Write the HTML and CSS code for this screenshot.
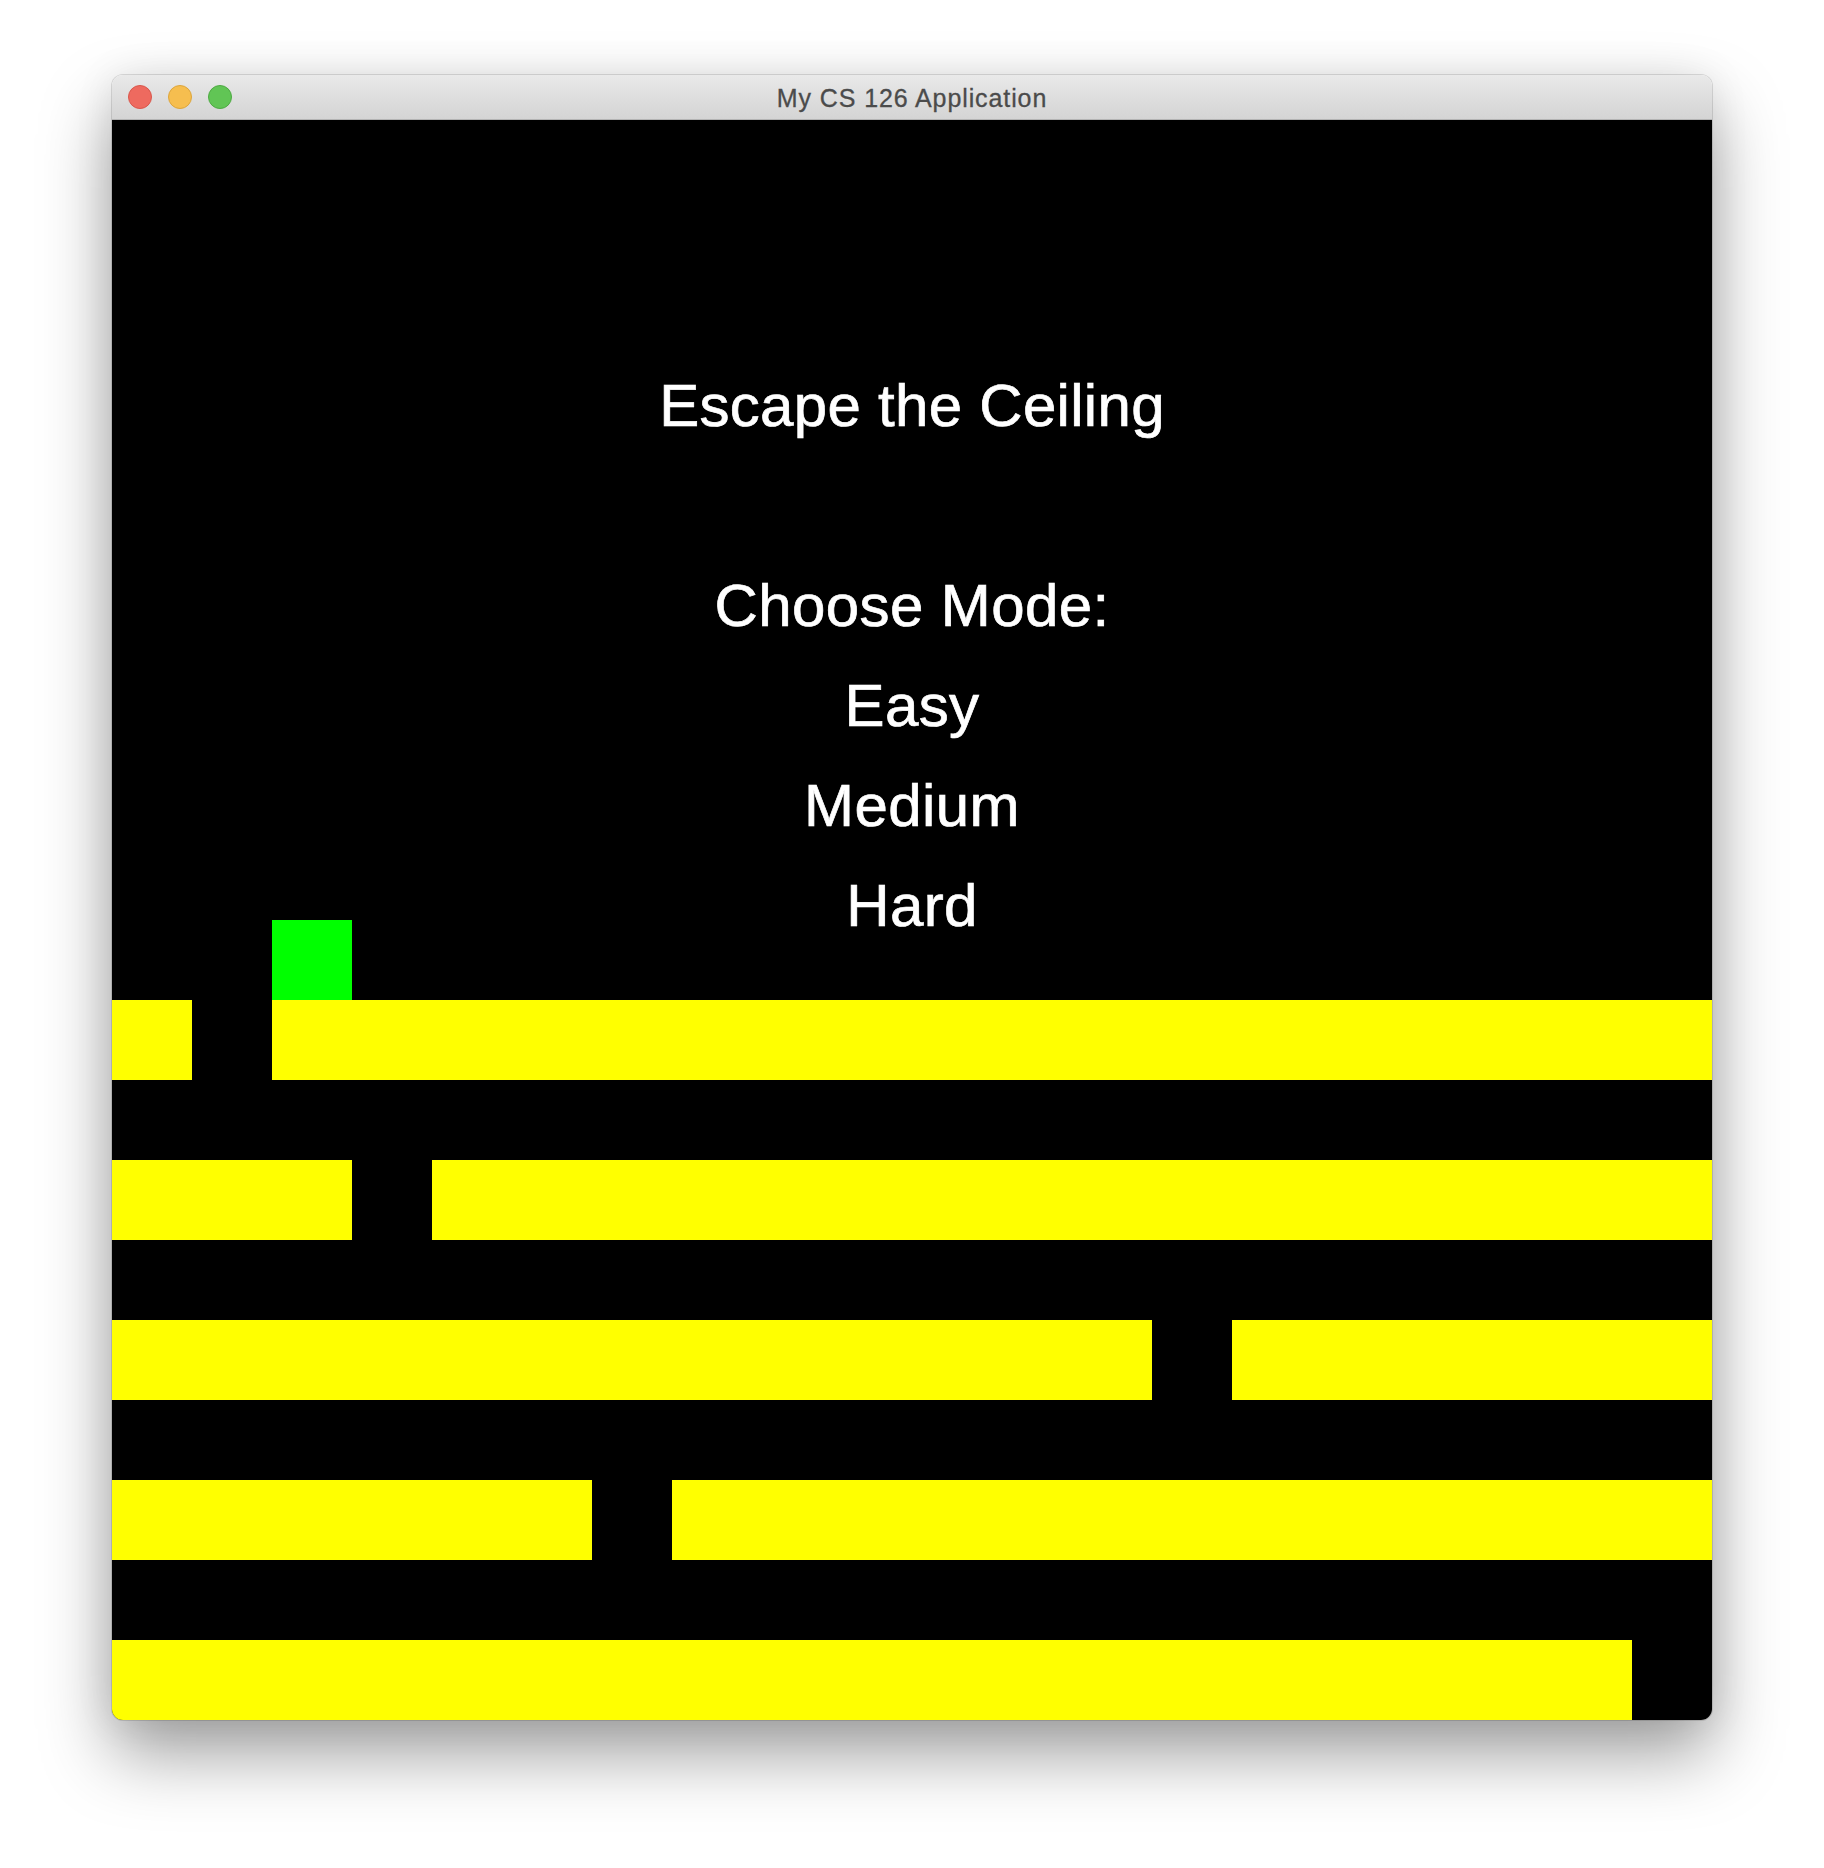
FILE: index.html
```html
<!DOCTYPE html>
<html>
<head>
<meta charset="utf-8">
<title>My CS 126 Application</title>
<link rel="stylesheet" href="styles.css">
</head>
<body>
<div class="window">
  <div class="titlebar">
    <div class="lights">
      <span class="light red"></span>
      <span class="light yellow"></span>
      <span class="light green"></span>
    </div>
    <div class="title">My CS 126 Application</div>
  </div>
  <div class="canvas">
    <div class="tile player r11 c3"></div>

    <div class="tile wall r12 w-1-2"></div>
    <div class="tile wall r12 w-3-21"></div>

    <div class="tile wall r14 w-1-4"></div>
    <div class="tile wall r14 w-5-21"></div>

    <div class="tile wall r16 w-1-14"></div>
    <div class="tile wall r16 w-15-21"></div>

    <div class="tile wall r18 w-1-7"></div>
    <div class="tile wall r18 w-8-21"></div>

    <div class="tile wall r20 w-1-20"></div>

    <div class="menu">
      <div class="menu-line heading">Escape the Ceiling</div>
      <div class="menu-line">Choose Mode:</div>
      <div class="menu-line">Easy</div>
      <div class="menu-line">Medium</div>
      <div class="menu-line">Hard</div>
    </div>
  </div>
</div>
</body>
</html>
```
FILE: styles.css
```css
html, body {
  margin: 0;
  padding: 0;
  background: #ffffff;
}
body {
  width: 1824px;
  height: 1868px;
  padding-top: 75px;
  padding-left: 112px;
  box-sizing: border-box;
  font-family: "Liberation Sans", Arial, sans-serif;
}
.window {
  width: 1600px;
  border-radius: 11px;
  overflow: hidden;
  box-shadow: 0 0 0 1px rgba(0,0,0,0.12), 0 34px 70px rgba(0,0,0,0.38), 0 0 40px rgba(0,0,0,0.08);
}
.titlebar {
  height: 44px;
  border-bottom: 1px solid #b3b3b3;
  background: linear-gradient(#e9e9e9, #d4d4d4);
  display: flex;
  align-items: center;
  justify-content: center;
  position: relative;
}
.lights {
  position: absolute;
  left: 16px;
  top: 10px;
  display: flex;
  gap: 16px;
}
.light {
  width: 22px;
  height: 22px;
  border-radius: 50%;
  border: 1px solid rgba(0,0,0,0.12);
}
.red { background: #ee6a5f; border-color: #d8574c; }
.yellow { background: #f6be4f; border-color: #dca53c; }
.green { background: #61c555; border-color: #4ea943; }
.title {
  color: #4b4b4b;
  font-size: 25px;
  letter-spacing: 0.9px;
  padding-top: 3px;
  -webkit-text-stroke: 0.3px #4b4b4b;
}
.canvas {
  background: #000;
  display: grid;
  grid-template-columns: repeat(20, 80px);
  grid-template-rows: repeat(20, 80px);
}
.wall { background: #ffff00; }
.player { background: #00ff00; }
.r11 { grid-row: 11; }
.r12 { grid-row: 12; }
.r14 { grid-row: 14; }
.r16 { grid-row: 16; }
.r18 { grid-row: 18; }
.r20 { grid-row: 20; }
.c3 { grid-column: 3; }
.w-1-2 { grid-column: 1 / 2; }
.w-3-21 { grid-column: 3 / 21; }
.w-1-4 { grid-column: 1 / 4; }
.w-5-21 { grid-column: 5 / 21; }
.w-1-14 { grid-column: 1 / 14; }
.w-15-21 { grid-column: 15 / 21; }
.w-1-7 { grid-column: 1 / 7; }
.w-8-21 { grid-column: 8 / 21; }
.w-1-20 { grid-column: 1 / 20; }
.menu {
  grid-row: 1 / -1;
  grid-column: 1 / -1;
  display: flex;
  flex-direction: column;
  align-items: center;
  padding-top: 236px;
  color: #fff;
  font-size: 60px;
  line-height: 100px;
  -webkit-text-stroke: 0.7px #fff;
  pointer-events: none;
  z-index: 1;
}
.menu-line {
  height: 100px;
  letter-spacing: 0.4px;
}
.heading {
  margin-bottom: 100px;
  letter-spacing: 0.3px;
}
```
